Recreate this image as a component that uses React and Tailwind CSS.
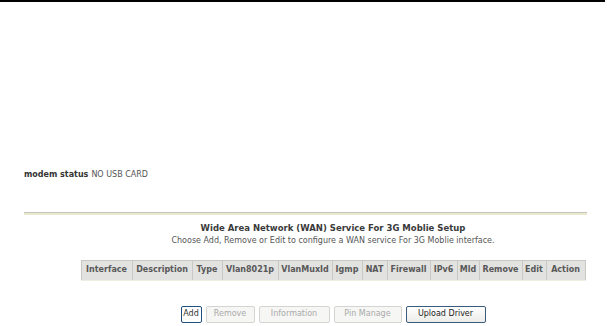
const cols = [
  ["Interface", 51],
  ["Description", 60],
  ["Type", 30],
  ["Vlan8021p", 56],
  ["VlanMuxId", 54],
  ["Igmp", 30],
  ["NAT", 25],
  ["Firewall", 43],
  ["IPv6", 27],
  ["Mld", 22],
  ["Remove", 43],
  ["Edit", 24],
  ["Action", 39],
]

const widthClass = {
  51: "w-[51px]",
  60: "w-[60px]",
  30: "w-[30px]",
  56: "w-[56px]",
  54: "w-[54px]",
  25: "w-[25px]",
  43: "w-[43px]",
  27: "w-[27px]",
  22: "w-[22px]",
  24: "w-[24px]",
  39: "w-[39px]",
}

function App() {
  return (
    <div className="w-[607px] h-[326px] bg-white overflow-hidden font-['DejaVu_Sans',sans-serif] text-[8px]">

      <div className="w-[605px] h-[2px] bg-black"></div>

      <div className="pl-[24px] pt-[167px] flex items-center h-[179px] leading-none">
        <span className="font-bold text-[#333]">modem status</span>
        <span className="ml-[3px] text-[#555]">NO USB CARD</span>
      </div>

      <div className="ml-[24px] mt-[31px] w-[563px] border-t border-[#c4c4c4] border-b-2 border-b-[#ece8cc] h-[3px]"></div>

      <div className="ml-[81px] w-[504px] flex flex-col items-center">
        <div className="mt-[9px] font-bold text-[#3a3a3a] text-[8.5px] leading-none">
          Wide Area Network (WAN) Service For 3G Moblie Setup
        </div>
        <div className="mt-[4px] text-[#555] leading-none">
          Choose Add, Remove or Edit to configure a WAN service For 3G Moblie interface.
        </div>

        <table className="mt-[15px] border-collapse table-fixed w-[504px]">
          <thead>
            <tr className="h-[20px]">
              {cols.map(([name, w]) => (
                <th
                  key={name}
                  className={widthClass[w] + " p-0 bg-[#e2e2e0] border border-[#c8c8c4] border-b-[#f0eee0] text-[#585858] font-bold text-[8px] text-center whitespace-nowrap"}
                >
                  {name}
                </th>
              ))}
            </tr>
          </thead>
        </table>

        <div className="mt-[25px] flex items-center gap-[4px] leading-none">
          <button className="h-[17px] w-[21px] rounded-[2px] border border-[#1f4f7f] bg-white text-[#333] text-[8px]">
            Add
          </button>
          <button className="h-[17px] w-[49px] rounded-[2px] border border-[#d4d4d0] bg-[#f6f6f4] text-[#aaa] text-[8px]">
            Remove
          </button>
          <button className="h-[17px] w-[71px] rounded-[2px] border border-[#d4d4d0] bg-[#f6f6f4] text-[#aaa] text-[8px]">
            Information
          </button>
          <button className="h-[17px] w-[68px] rounded-[2px] border border-[#d4d4d0] bg-[#f6f6f4] text-[#aaa] text-[8px]">
            Pin Manage
          </button>
          <button className="h-[17px] w-[80px] rounded-[2px] border border-[#3c5a7c] bg-gradient-to-b from-white to-[#ececea] text-[#222] text-[8px]">
            Upload Driver
          </button>
        </div>
      </div>

    </div>
  )
}

export default App
